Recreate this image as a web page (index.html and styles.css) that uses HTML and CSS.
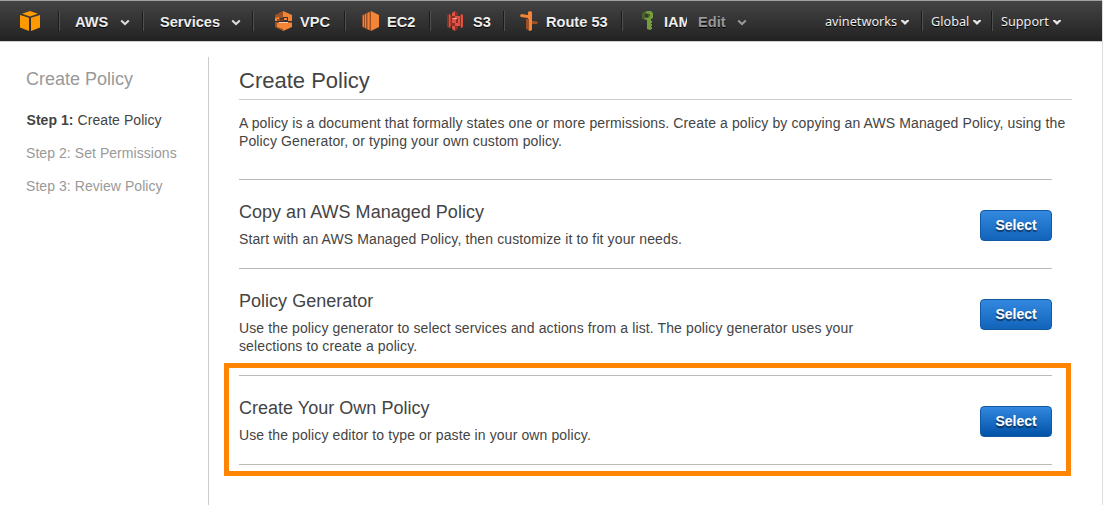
FILE: index.html
```html
<!DOCTYPE html>
<html lang="en">
<head>
<meta charset="utf-8">
<title>Create Policy</title>
<link rel="stylesheet" href="styles.css">
</head>
<body>
<div class="page">
  <header class="nav">
    <div class="cell logo">
      <svg width="20" height="20" viewBox="0 0 20 20" fill="#ff9900"><path d="M10 0 18 2.7 10 5.4 2 2.7zM0 4 9 6.8V20L0 16.4zM20 4 11 6.8V20l9-3.6z"/></svg>
    </div>
    <div class="cell aws"><span>AWS</span><svg class="chev" width="10" height="7" viewBox="0 0 10 7"><path d="M1.2 1.4 5 5l3.8-3.6"/></svg></div>
    <div class="cell services"><span>Services</span><svg class="chev" width="10" height="7" viewBox="0 0 10 7"><path d="M1.2 1.4 5 5l3.8-3.6"/></svg></div>
    <div class="cell vpc">
      <svg class="icon" width="17" height="20" viewBox="0 0 17 20"><path fill="#9d5025" d="M0 4 8 0v7H5v3H0zM0 12h8v8l-8-4z"/><path fill="#f58536" d="m8 0 9 4v6h-4V6H8zM8 12h9v4l-9 4zM0 7l4-1v2H2v2H0zM2 12h6v6l-6-2z"/><path fill="#7a3d1b" d="M5 8h4v2H5z"/><path fill="#f58536" d="M9 7h3v2H9z"/><path fill="#f3c7a8" d="M4 11h9v1H4z"/><path fill="#9d5025" d="M0 11h4v1H0zM13 11h4v1h-4z"/></svg><span>VPC</span></div>
    <div class="cell ec2">
      <svg class="icon" width="17" height="20" viewBox="0 0 17 20"><path fill="#9d5025" d="M0 4.3 9 0v20l-9-4z"/><path fill="#f58536" d="m9 0 8 4v12l-8 4zM1 4.6l1-.4v11.6l-1-.4zM3 3.6l1-.5v13.8l-1-.5zM5.5 2.2 7.5 1v18l-2-1z"/></svg><span>EC2</span></div>
    <div class="cell s3">
      <svg class="icon" width="17" height="20" viewBox="0 0 17 20"><path fill="#8c3123" d="M0 4 2 3v14l-2-1zM3 5h5v10H3zM8 0l3 2v3H8zM8 15h3v3l-3 2zM13 3l2 1v12l-2 1z"/><path fill="#e05243" d="m2 3 1.5.8v12.4L2 17zM8 5h5v10H8zM5 2l3-2v5H5zM5 15h3v5l-3-2zM14 3l2 1v12l-2 1zM5 7h3v5H5z"/><path fill="#8c3123" d="M9 7h2v5H9z"/><path fill="#f2b0a9" d="M6 7h4v1H6z"/></svg><span>S3</span></div>
    <div class="cell route">
      <svg class="icon" width="18" height="20" viewBox="0 0 18 20"><path fill="#f58536" d="m8 1 2-1 2 1v18l-2 1-2-1zM1 3l7 1v3L1 6 0 5z"/><path fill="#9d5025" d="M6 8h3v11l-3-1zM12 10l5 .2 1 1.3-1 1.5h-5z"/></svg><span>Route 53</span></div>
    <div class="cell iam">
      <svg class="icon" width="12" height="20" viewBox="0 0 12 20"><path fill="#4b612c" fill-rule="evenodd" d="m0 2 4-2 4 1v7L5 9 0 8zM3 3v3h3V3z"/><path fill="#759c3e" fill-rule="evenodd" d="M5 0h4l2 2v5L9 8v2h1v2H9v1h1v2H9v1h1v2l-2 1-3-1V9L2 8l1-1h3l2-2V3L3 2z"/></svg><span class="clip">IAM</span></div>
    <div class="edit"><span>Edit</span><svg class="chev" width="10" height="7" viewBox="0 0 10 7"><path d="M1.2 1.4 5 5l3.8-3.6"/></svg></div>
    <div class="account">
      <div class="cell user">avinetworks <svg class="tri" width="8" height="5" viewBox="0 0 8 5"><path d="M0 0h2l2 1.5L6 0h2v1L4 5 0 1z"/></svg></div>
      <div class="cell region">Global <svg class="tri" width="8" height="5" viewBox="0 0 8 5"><path d="M0 0h2l2 1.5L6 0h2v1L4 5 0 1z"/></svg></div>
      <div class="cell support">Support <svg class="tri" width="8" height="5" viewBox="0 0 8 5"><path d="M0 0h2l2 1.5L6 0h2v1L4 5 0 1z"/></svg></div>
    </div>
  </header>
  <div class="body">
    <aside class="side">
      <h2>Create Policy</h2>
      <p class="current"><b>Step 1:</b> Create Policy</p>
      <p>Step 2: Set Permissions</p>
      <p>Step 3: Review Policy</p>
    </aside>
    <main class="main">
      <h1>Create Policy</h1>
      <p class="intro">A policy is a document that formally states one or more permissions. Create a policy by copying an AWS Managed Policy, using the Policy Generator, or typing your own custom policy.</p>
      <section class="option">
        <div class="text"><h3>Copy an AWS Managed Policy</h3><p>Start with an AWS Managed Policy, then customize it to fit your needs.</p></div>
        <button class="select">Select</button>
      </section>
      <section class="option">
        <div class="text"><h3>Policy Generator</h3><p>Use the policy generator to select services and actions from a list. The policy generator uses your selections to create a policy.</p></div>
        <button class="select">Select</button>
      </section>
      <section class="option chosen">
        <div class="text"><h3>Create Your Own Policy</h3><p>Use the policy editor to type or paste in your own policy.</p></div>
        <button class="select active">Select</button>
      </section>
    </main>
  </div>
</div>
</body>
</html>
```
FILE: styles.css
```css
* { box-sizing: border-box; }
body {
  margin: 0;
  background: #fff;
  color: #444;
  font: 14px/18px "Liberation Sans", Arial, sans-serif;
  overflow: hidden;
}
h1, h2, h3, p { margin: 0; font-weight: normal; }
.page {
  width: 1103px;
  height: 505px;
  display: flex;
  flex-direction: column;
  border-right: 1px solid #ddd;
}
.nav {
  height: 42px;
  flex: none;
  display: flex;
  align-items: center;
  border-top: 1px solid #a0a0a0;
  border-bottom: 1px solid #ccc;
  background: linear-gradient(#444, #222);
  color: #eee;
  font-size: 14.6px;
  font-weight: bold;
  text-shadow: 0 1px 0 #000;
  white-space: nowrap;
}
.nav span { padding-top: 2px; }
.cell {
  height: 20px;
  display: flex;
  align-items: center;
  border-right: 1px solid #505050;
  box-shadow: inset -1px 0 #1c1c1c;
}
.logo { width: 60px; padding-left: 20px; }
.aws { width: 84px; padding-left: 15px; gap: 12px; }
.services { width: 110px; padding-left: 16px; gap: 11px; }
.vpc { width: 92px; padding-left: 21px; }
.ec2 { width: 85px; padding-left: 16px; }
.s3 { width: 74px; padding-left: 16px; }
.route { width: 118px; padding-left: 15px; }
.iam { width: 64px; padding-left: 19px; border: 0; box-shadow: none; }
.icon { flex: none; margin-right: 8px; }
.s3 .icon { margin-right: 9px; }
.iam .icon { margin-right: 10px; }
.clip { width: 23px; overflow: hidden; }
.chev { fill: none; stroke: #ddd; stroke-width: 2; margin-top: 3px; }
.edit {
  display: flex;
  align-items: center;
  gap: 11px;
  margin-left: 11px;
  color: #999;
}
.edit .chev { stroke: #999; }
.account {
  display: flex;
  margin-left: auto;
  font: 12.7px/20px "Noto Sans", "Open Sans", sans-serif;
}
.account .cell { gap: 4px; }
.user { width: 98px; }
.region { width: 70px; padding-left: 8px; }
.support { width: 109px; padding-left: 8px; }
.account .support { border: 0; box-shadow: none; }
.tri { fill: #e6e6e6; margin-top: 2px; }
.body {
  flex: 1;
  display: flex;
  padding-top: 15px;
}
.side {
  width: 209px;
  padding: 10px 0 0 26px;
  border-right: 1px solid #ccc;
  color: #999;
}
.side h2 { font-size: 18px; line-height: 24px; margin-bottom: 20px; }
.side p { margin-bottom: 15px; letter-spacing: .06px; }
.side .current { color: #444; padding-left: .5px; }
.main { flex: 1; padding: 8px 30px 0; }
.main h1 {
  height: 35px;
  border-bottom: 1px solid #ccc;
  font-size: 22px;
  line-height: 32px;
}
.main p { letter-spacing: .115px; }
.intro { margin: 14px 0 29px; }
.option {
  position: relative;
  width: 813px;
  display: flex;
  justify-content: space-between;
  align-items: flex-start;
  border-top: 1px solid #bbb;
  padding: 21px 0 20px;
}
.text { width: 640px; }
.text h3 { font-size: 18px; line-height: 22px; margin-bottom: 7px; letter-spacing: .02px; }
.select {
  width: 72px;
  height: 31px;
  margin-top: 9px;
  padding: 0 0 2px;
  border: 1px solid #1259a5;
  border-radius: 4px;
  background: linear-gradient(#3388df, #1164ba);
  color: #fff;
  font: bold 14px/18px "Liberation Sans", Arial, sans-serif;
  text-shadow: 0 2px 1px rgba(0, 0, 0, .5);
}
.select.active { background: linear-gradient(#3388df, #0052a6); }
.chosen { border-bottom: 1px solid #bbb; }
/* Highlight frame around the chosen option */
.chosen::after {
  content: "";
  position: absolute;
  inset: -13px -19px -12px -15px;
  border: 5px solid #ff8400;
}
```
